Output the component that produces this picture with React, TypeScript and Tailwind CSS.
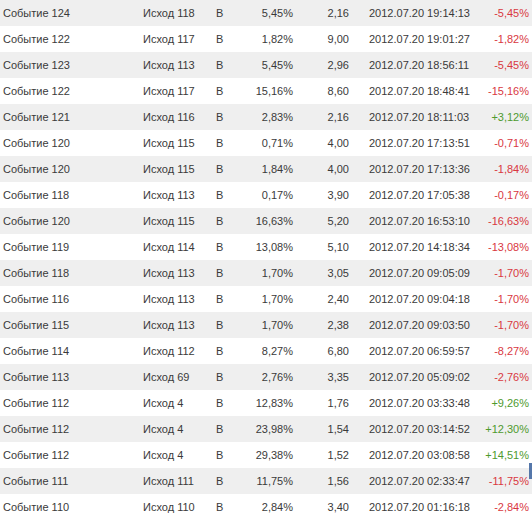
import React from "react";

type Row = [string, string, string, string, string, string];

const rows: Row[] = [
  ["Событие 124", "Исход 118", "5,45%", "2,16", "2012.07.20 19:14:13", "-5,45%"],
  ["Событие 122", "Исход 117", "1,82%", "9,00", "2012.07.20 19:01:27", "-1,82%"],
  ["Событие 123", "Исход 113", "5,45%", "2,96", "2012.07.20 18:56:11", "-5,45%"],
  ["Событие 122", "Исход 117", "15,16%", "8,60", "2012.07.20 18:48:41", "-15,16%"],
  ["Событие 121", "Исход 116", "2,83%", "2,16", "2012.07.20 18:11:03", "+3,12%"],
  ["Событие 120", "Исход 115", "0,71%", "4,00", "2012.07.20 17:13:51", "-0,71%"],
  ["Событие 120", "Исход 115", "1,84%", "4,00", "2012.07.20 17:13:36", "-1,84%"],
  ["Событие 118", "Исход 113", "0,17%", "3,90", "2012.07.20 17:05:38", "-0,17%"],
  ["Событие 120", "Исход 115", "16,63%", "5,20", "2012.07.20 16:53:10", "-16,63%"],
  ["Событие 119", "Исход 114", "13,08%", "5,10", "2012.07.20 14:18:34", "-13,08%"],
  ["Событие 118", "Исход 113", "1,70%", "3,05", "2012.07.20 09:05:09", "-1,70%"],
  ["Событие 116", "Исход 113", "1,70%", "2,40", "2012.07.20 09:04:18", "-1,70%"],
  ["Событие 115", "Исход 113", "1,70%", "2,38", "2012.07.20 09:03:50", "-1,70%"],
  ["Событие 114", "Исход 112", "8,27%", "6,80", "2012.07.20 06:59:57", "-8,27%"],
  ["Событие 113", "Исход 69", "2,76%", "3,35", "2012.07.20 05:09:02", "-2,76%"],
  ["Событие 112", "Исход 4", "12,83%", "1,76", "2012.07.20 03:33:48", "+9,26%"],
  ["Событие 112", "Исход 4", "23,98%", "1,54", "2012.07.20 03:14:52", "+12,30%"],
  ["Событие 112", "Исход 4", "29,38%", "1,52", "2012.07.20 03:08:58", "+14,51%"],
  ["Событие 111", "Исход 111", "11,75%", "1,56", "2012.07.20 02:33:47", "-11,75%"],
  ["Событие 110", "Исход 110", "2,84%", "3,40", "2012.07.20 01:16:18", "-2,84%"],
];

export default function App() {
  return (
    <div
      className="relative w-[532px] h-[514px] overflow-hidden bg-white text-[11px] text-[#3a3a3a]"
      style={{ fontFamily: '"Liberation Sans", Arial, sans-serif' }}
    >
      {rows.map((r, i) => (
        <div
          key={i}
          className={`flex h-[26px] items-center leading-[26px] ${i % 2 === 0 ? "bg-[#efefef]" : "bg-white"}`}
        >
          <div className="w-[143px] shrink-0 pl-[3px] whitespace-nowrap">{r[0]}</div>
          <div className="w-[73px] shrink-0 whitespace-nowrap">{r[1]}</div>
          <div className="w-[30px] shrink-0">В</div>
          <div className="w-[47px] shrink-0 text-right whitespace-nowrap">{r[2]}</div>
          <div className="w-[56px] shrink-0 text-right whitespace-nowrap">{r[3]}</div>
          <div className="w-[120px] shrink-0 pl-[20px] whitespace-nowrap">{r[4]}</div>
          <div
            className={`flex-1 text-right pr-[3px] whitespace-nowrap ${r[5].startsWith("+") ? "text-[#4e9a2e]" : "text-[#d9383f]"}`}
          >
            {r[5]}
          </div>
        </div>
      ))}
      <div className="absolute left-[529px] top-[463px] w-[3px] h-[16px] bg-[#5577aa]" />
    </div>
  );
}
